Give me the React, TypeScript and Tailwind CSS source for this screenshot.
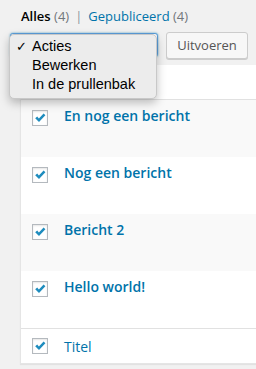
import React from "react";

const posts = [
  { title: "En nog een bericht", alt: true },
  { title: "Nog een bericht", alt: false },
  { title: "Bericht 2", alt: true },
  { title: "Hello world!", alt: false },
];

const Checkbox = () => (
  <span className="flex h-[16px] w-[16px] shrink-0 items-center justify-center border border-[#b4b9be] bg-white shadow-[inset_0_1px_2px_rgba(0,0,0,0.1)]">
    <svg width="14" height="14" viewBox="0 0 14 14">
      <path d="M2.2 7.2 L4.2 5.6 L5.9 7.6 L10.6 2.6 L12.4 4.2 L6 11 Z" fill="#1e8cbe" />
    </svg>
  </span>
);

export default function App() {
  return (
    <div className="relative h-[369px] w-[256px] overflow-hidden bg-[#f1f1f1] font-['Open_Sans',sans-serif]">
      {/* status links */}
      <div className="pl-[21px] pt-[6px] text-[13px] leading-[20px] text-[#72777c]">
        <span className="font-semibold text-black">Alles</span> (4)
        <span className="mx-[6px] text-[#8c959c]">|</span>
        <span className="text-[#0073aa]">Gepubliceerd</span> (4)
      </div>

      {/* bulk actions */}
      <div className="mt-[6px] flex items-start pl-[10px]">
        <div className="mt-[1px] h-[24px] w-[148px] rounded-[3px] border border-[#5b9dd9] bg-white shadow-[0_0_2px_rgba(30,140,190,0.8)]" />
        <button className="ml-[8px] h-[27px] w-[82px] rounded-[3px] border border-[#cccccc] bg-[#f7f7f7] text-[13px] text-[#555555] shadow-[0_1px_0_#cccccc]">
          Uitvoeren
        </button>
      </div>

      {/* posts table */}
      <div className="ml-[20px] mt-[6px] border-b border-l border-[#e5e5e5] bg-white shadow-[0_1px_1px_rgba(0,0,0,0.06)]">
        {/* column header, covered by the open select menu */}
        <div className="flex h-[35px] items-start border-b border-[#e1e1e1] pl-[11px] pt-[8px]">
          <span className="mt-[1px]">
            <Checkbox />
          </span>
        </div>
        {posts.map((p) => (
          <div
            key={p.title}
            className={`flex h-[57px] items-start gap-[16px] pl-[11px] pt-[6px] ${p.alt ? "bg-[#f9f9f9]" : "bg-white"}`}
          >
            <span className="mt-[4px]">
              <Checkbox />
            </span>
            <span className="text-[14px] font-semibold leading-[20px] text-[#0073aa]">{p.title}</span>
          </div>
        ))}
        <div className="flex h-[35px] items-start gap-[16px] border-t border-[#e1e1e1] pl-[11px] pt-[8px]">
          <span className="mt-[1px]">
            <Checkbox />
          </span>
          <span className="text-[14px] leading-[20px] text-[#0073aa]">Titel</span>
        </div>
      </div>

      {/* native select menu */}
      <div className="absolute left-[9px] top-[34px] w-[148px] rounded-[5px] border border-[#c8c8c8] bg-[#ececec] pb-[4px] pt-[2px] font-['Liberation_Sans',sans-serif] text-[14.5px] leading-[19px] text-black shadow-[0_4px_10px_rgba(0,0,0,0.25)]">
        <div className="relative pl-[22px]">
          <span className="absolute left-[6px] top-0 font-['DejaVu_Sans',sans-serif] text-[13px] font-bold">✓</span>
          Acties
        </div>
        <div className="pl-[22px]">Bewerken</div>
        <div className="pl-[22px]">In de prullenbak</div>
      </div>
    </div>
  );
}
